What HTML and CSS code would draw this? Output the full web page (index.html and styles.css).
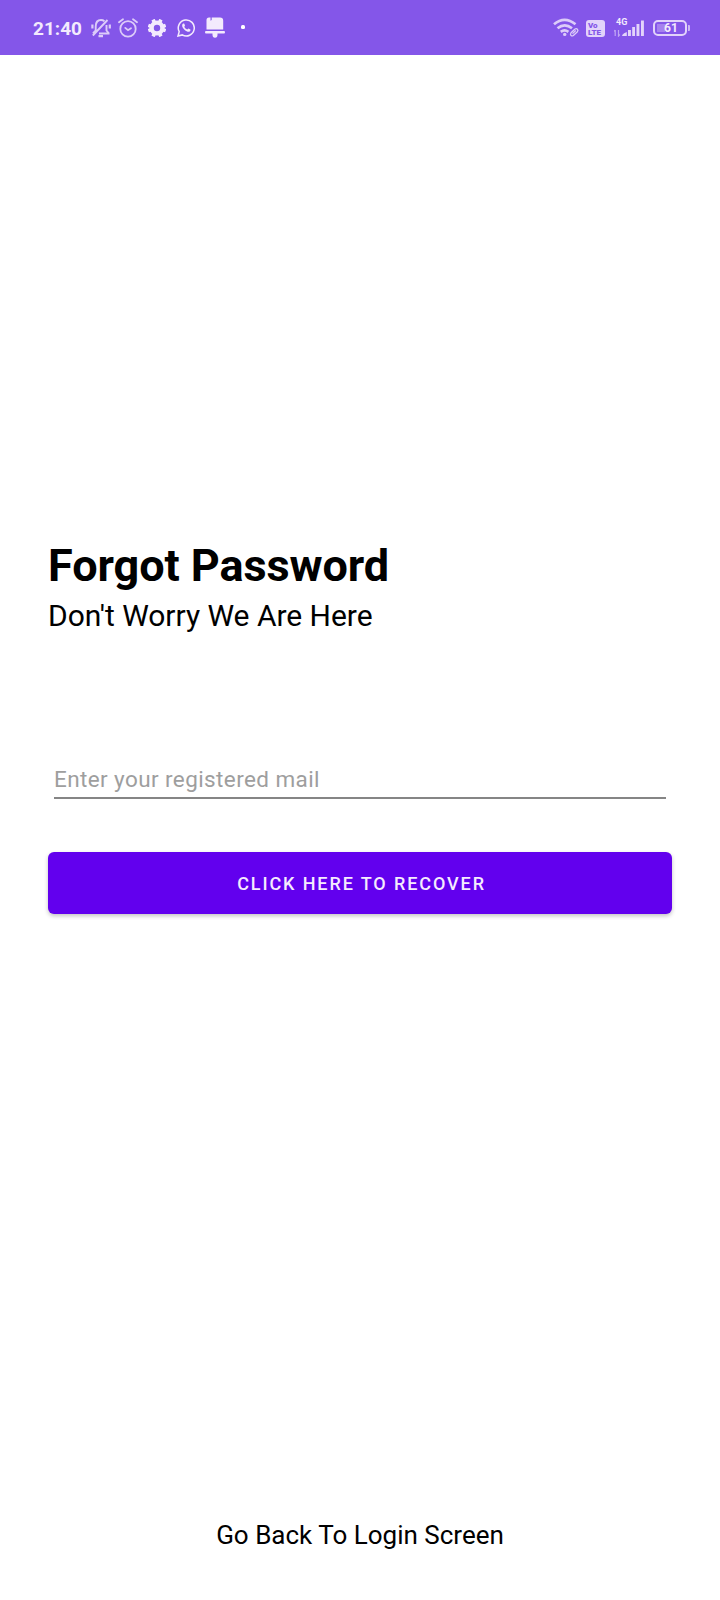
FILE: index.html
```html
<!DOCTYPE html>
<html lang="en">
<head>
<meta charset="utf-8">
<title>Forgot Password</title>
<link rel="stylesheet" href="styles.css">
</head>
<body>
<div class="screen">
  <header class="status">
    <div class="status-left">
      <span class="time">21:40</span>
      <svg class="icon dim" width="20" height="20" viewBox="0 0 20 20" fill="none" stroke="currentColor" stroke-width="1.900">
        <path d="M8 15.500h10.500M2 15.500l2.700-3V8.500C4.700 4.700 6.600 2 10 2c1.300 0 2.500.4 3.400 1.200M15.500 7v5.500l2.500 3M1.800 17.500 16.500 2"/>
        <path d="M7.500 18.200h4.500M1.400 6.500v4M18.800 6.500v4" stroke-width="2.200"/>
      </svg>
      <svg class="icon alarm dim" width="20" height="20" viewBox="0 0 20 20" fill="none" stroke="currentColor" stroke-width="1.800" stroke-linecap="round">
        <circle cx="10" cy="10.900" r="7.700"/>
        <path d="M7.300 9.900 10 12.200l3-2M1 4.300 5 1.300M19 4.300l-4-3"/>
      </svg>
      <svg class="icon gear" width="18" height="18" viewBox="0 0 18 18" fill="none" stroke="currentColor">
        <circle cx="9" cy="9" r="5.400" stroke-width="4.400"/>
        <path d="M5 .6l1.600 3M13 .6l-1.600 3M5 17.400l1.600-3M13 17.400l-1.600-3M.3 6.300l3 1.200M.3 11.700l3-1.200M17.700 6.300l-3 1.200M17.700 11.700l-3-1.200" stroke-width="3.600"/>
      </svg>
      <svg class="icon whatsapp" width="18" height="18" viewBox="0 0 18 18">
        <path d="M1 17l1.200-4.300A8 8 0 1 1 5.300 15.900Z" fill="none" stroke="currentColor" stroke-width="1.500"/>
        <path d="M6.200 4.600c.5-.3 1-.2 1.200.3l.6 1.500c.1.400-.7 1-.7 1.300.6 1.300 1.600 2.200 3 2.800.4 0 .9-1 1.300-.9l1.700.8c.5.3.1 1.500-.6 2-1.200.8-3.300 0-5-1.500-1.600-1.500-2.900-3.400-2.500-4.900.1-.6.500-1.100 1-1.400Z" fill="currentColor"/>
      </svg>
      <svg class="icon notice" width="20" height="22" viewBox="0 0 20 22" fill="currentColor">
        <path d="M4 .5h1.500v3.300l1.200-.8V.5H15q3.200 0 3.200 3V12.400H1.500V3Q1.500.500 4 .500ZM1 14h18q1 0 1 1.200t-1 1.200h-6.500v1.300q0 3-2.500 3t-2.500-3V16.400H1q-1 0-1-1.200t1-1.200Z"/>
      </svg>
      <span class="dot"></span>
    </div>
    <div class="status-right">
      <svg class="icon dim" width="27" height="20" viewBox="0 0 27 20" fill="none" stroke="currentColor" stroke-width="2.700">
        <path d="M1 6.200q10.500-8.800 21.500 0M4.500 10.200q7.200-5.800 14.500 0M7.800 13.800q3.700-2.800 7.600 0"/>
        <circle cx="11.700" cy="16.400" r="1.700" fill="currentColor" stroke="none"/>
        <path d="m18 14.800 3.700-3.600q1.600-1.200 2.700 0t0 2.500l-4 3.700q-1.300 1-2.400 0t0-2.600Zm1.500.8 3.300-3.100" stroke-width="1.300"/>
      </svg>
      <span class="volte"><span>Vo</span><span>LTE</span></span>
      <span class="cell">
        <span class="network">4G</span>
        <svg width="32" height="18" viewBox="0 0 32 18" fill="currentColor">
          <path d="M1.200 17v-6M0 12.500l1.200-1.500M4.500 11v6l1.300-1.500" fill="none" stroke="currentColor" stroke-width="1.200" opacity=".55"/>
          <path d="M8.200 17v-1q1.500-2 4.600-3v4ZM14 10.900h2.900v6.100H14ZM18.200 8H21v9h-2.800ZM22.500 5h2.900v12h-2.900ZM27 1.500h2.900V17H27Z" opacity=".85"/>
        </svg>
      </span>
      <span class="battery"><span class="charge">61</span></span>
    </div>
  </header>
  <main class="content">
    <h1 class="title">Forgot Password</h1>
    <p class="subtitle">Don't Worry We Are Here</p>
    <input class="mail" type="email" placeholder="Enter your registered mail">
    <button class="recover">CLICK HERE TO RECOVER</button>
  </main>
  <footer class="footer"><a class="back">Go Back To Login Screen</a></footer>
</div>
</body>
</html>
```
FILE: styles.css
```css
* { box-sizing: border-box; }
body { margin: 0; background: #fff; font-family: Roboto, sans-serif; color: #000; }
.screen { height: 1600px; display: flex; flex-direction: column; }
.status {
  height: 55px; background: #8456e9; color: #f3eafd;
  display: flex; justify-content: space-between; padding: 0 30px 0 33px;
}
.status-left, .status-right { display: flex; align-items: center; height: 55px; }
.icon { display: block; flex: none; }
.dim { opacity: .8; }
.time { font-size: 19px; font-weight: 700; width: 50px; line-height: 24px; margin-right: 8px; padding-top: 2px; white-space: nowrap; }
.alarm { margin-left: 7px; }
.gear { margin-left: 10px; }
.whatsapp { margin-left: 11px; }
.notice { margin-left: 10px; }
.dot { width: 4px; height: 4px; border-radius: 1.500px; background: #fff; margin: 0 0 1px 16px; }
.volte {
  width: 19px; height: 17px; margin: 1px 9px 0 6px; border-radius: 3px; background: #e2d3fa; color: #8456e9;
  font-size: 8px; font-weight: 900; line-height: 7px; padding: 2px 0 0 2px; display: flex; flex-direction: column;
}
.cell { width: 32px; height: 18px; display: block; position: relative; }
.cell svg { display: block; }
.network { position: absolute; left: 2px; top: -1px; font-size: 9px; line-height: 9px; font-weight: 700; }
.battery {
  width: 34px; height: 16px; border: 2px solid #e2d3fa; border-radius: 5px; margin: 1px 3px 0 7px;
  padding: 2px; position: relative;
}
.battery::after { content: ""; position: absolute; right: -5px; top: 3px; width: 2px; height: 6px; background: #cdb7f5; border-radius: 0 1px 1px 0; }
.charge {
  display: block; height: 8px; padding-left: 2px; font-size: 12px; line-height: 8px; font-weight: 700; text-align: center;
  background: linear-gradient(to right, #a681ef 8px, transparent 8px);
}
.content { flex: 1; padding: 481px 48px 0; display: flex; flex-direction: column; }
.title { margin: 0; font-size: 45px; line-height: 60px; font-weight: 700; letter-spacing: -.07px; }
.subtitle { margin: 2px 0 0; font-size: 30px; line-height: 36px; letter-spacing: -.03px; }
.mail {
  margin: 130px 6px 0; padding: 0 0 3px; height: 35px; border: 0; border-bottom: 2px solid #858585; border-radius: 0;
  outline: 0; background: none; font: 22.500px/30px Roboto, sans-serif; letter-spacing: .400px; color: #000;
}
.mail::placeholder { color: #9e9e9e; opacity: 1; }
.recover {
  margin-top: 53px; height: 62px; border: 0; border-radius: 6px; background: #6200ee; color: #f5ebfe;
  font: 500 18px/24px Roboto, sans-serif; letter-spacing: 1.900px; padding: 2px 0 0 3px; box-shadow: 0 2px 4px rgba(0,0,0,.24);
}
.footer { height: 82px; text-align: center; }
.back { font-size: 26px; line-height: 34px; }
```
